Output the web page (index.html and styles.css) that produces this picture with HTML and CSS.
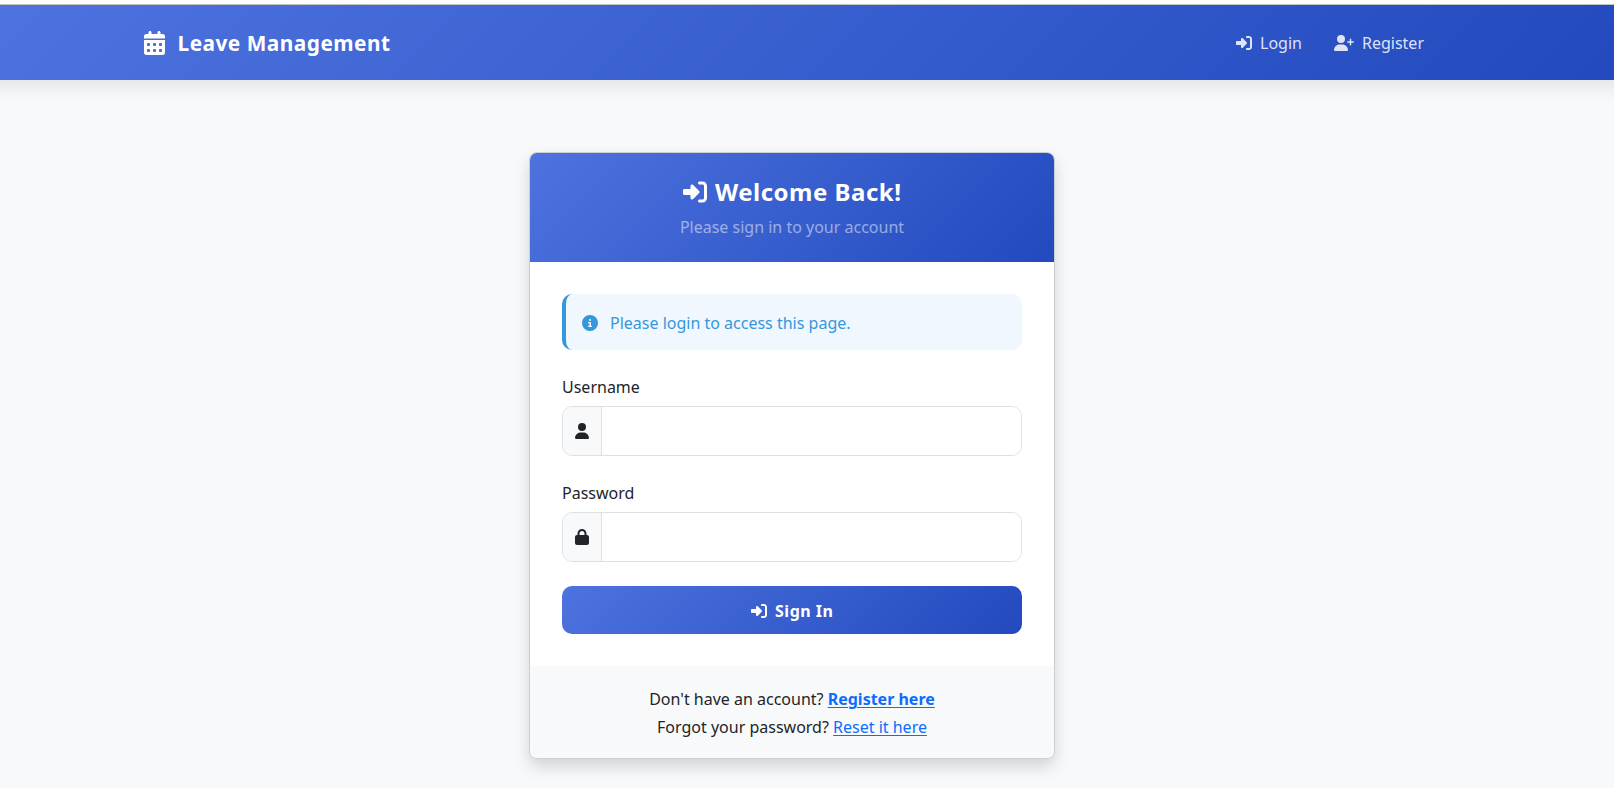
FILE: index.html
```html
<!DOCTYPE html>
<html lang="en">
<head>
<meta charset="utf-8">
<title>Login - Leave Management</title>
<link rel="stylesheet" href="styles.css">
</head>
<body>
<svg width="0" height="0" class="sprite" aria-hidden="true">
  <symbol id="sign-in" viewBox="0 0 512 512"><path d="M217.9 105.9L340.7 228.7c7.2 7.2 11.3 17.1 11.3 27.3s-4.1 20.1-11.3 27.3L217.9 406.1c-6.4 6.4-15 9.9-24 9.9c-18.7 0-33.9-15.2-33.9-33.9l0-62.1L32 320c-17.7 0-32-14.3-32-32l0-64c0-17.7 14.3-32 32-32l128 0 0-62.1c0-18.7 15.2-33.9 33.9-33.9c9 0 17.6 3.6 24 9.9zM352 416l64 0c17.7 0 32-14.3 32-32l0-256c0-17.7-14.3-32-32-32l-64 0c-17.7 0-32-14.3-32-32s14.3-32 32-32l64 0c53 0 96 43 96 96l0 256c0 53-43 96-96 96l-64 0c-17.7 0-32-14.3-32-32s14.3-32 32-32z"/></symbol>
  <symbol id="user" viewBox="0 0 448 512"><path d="M224 256A128 128 0 1 0 224 0a128 128 0 1 0 0 256zm-45.700 48C79.800 304 0 383.800 0 482.300C0 498.700 13.300 512 29.700 512H418.300c16.400 0 29.700-13.300 29.700-29.700C448 383.800 368.200 304 269.700 304H178.300z"/></symbol>
  <symbol id="lock" viewBox="0 0 448 512"><path d="M144 144v48H304V144c0-44.200-35.800-80-80-80s-80 35.800-80 80zM80 192V144C80 64.500 144.500 0 224 0s144 64.500 144 144v48h16c35.300 0 64 28.700 64 64V448c0 35.300-28.700 64-64 64H64c-35.300 0-64-28.700-64-64V256c0-35.300 28.700-64 64-64H80z"/></symbol>
  <symbol id="user-plus" viewBox="0 0 640 512"><path d="M96 128a128 128 0 1 1 256 0A128 128 0 1 1 96 128zM0 482.300C0 383.800 79.800 304 178.300 304h91.400C368.200 304 448 383.800 448 482.300c0 16.400-13.300 29.700-29.700 29.700H29.700C13.300 512 0 498.700 0 482.300zM504 312V248H440c-13.300 0-24-10.700-24-24s10.700-24 24-24h64V136c0-13.300 10.700-24 24-24s24 10.700 24 24v64h64c13.300 0 24 10.700 24 24s-10.700 24-24 24H552v64c0 13.300-10.700 24-24 24s-24-10.700-24-24z"/></symbol>
  <symbol id="info" viewBox="0 0 512 512"><path d="M256 512A256 256 0 1 0 256 0a256 256 0 1 0 0 512zM216 336h24V272H216c-13.300 0-24-10.700-24-24s10.700-24 24-24h48c13.300 0 24 10.700 24 24v88h8c13.300 0 24 10.700 24 24s-10.700 24-24 24H216c-13.300 0-24-10.700-24-24s10.700-24 24-24zm40-208a32 32 0 1 1 0 64 32 32 0 1 1 0-64z"/></symbol>
  <symbol id="calendar" viewBox="0 0 448 512"><path d="M128 0c17.700 0 32 14.300 32 32V64H288V32c0-17.700 14.300-32 32-32s32 14.300 32 32V64h48c26.500 0 48 21.500 48 48v48H0V112C0 85.500 21.500 64 48 64H96V32c0-17.700 14.300-32 32-32zM0 192H448V464c0 26.500-21.500 48-48 48H48c-26.500 0-48-21.500-48-48V192zm64 80v32c0 8.800 7.200 16 16 16h32c8.800 0 16-7.200 16-16V272c0-8.800-7.200-16-16-16H80c-8.800 0-16 7.200-16 16zm128 0v32c0 8.800 7.200 16 16 16h32c8.800 0 16-7.200 16-16V272c0-8.800-7.200-16-16-16H208c-8.800 0-16 7.200-16 16zm144-16c-8.800 0-16 7.200-16 16v32c0 8.800 7.200 16 16 16h32c8.800 0 16-7.200 16-16V272c0-8.800-7.200-16-16-16H336zM64 400v32c0 8.800 7.200 16 16 16h32c8.800 0 16-7.200 16-16V400c0-8.800-7.200-16-16-16H80c-8.800 0-16 7.200-16 16zm144-16c-8.800 0-16 7.200-16 16v32c0 8.800 7.200 16 16 16h32c8.800 0 16-7.200 16-16V400c0-8.800-7.200-16-16-16H208zm112 16v32c0 8.800 7.200 16 16 16h32c8.800 0 16-7.200 16-16V400c0-8.800-7.200-16-16-16H336c-8.800 0-16 7.200-16 16z"/></symbol>
</svg>

<nav class="navbar">
  <div class="container navbar-inner">
    <a class="brand" href="#"><svg class="brand-icon"><use href="#calendar"/></svg><span>Leave Management</span></a>
    <div class="nav-links">
      <a class="nav-link" href="#"><svg class="icon"><use href="#sign-in"/></svg><span>Login</span></a>
      <a class="nav-link" href="#"><svg class="icon icon-wide"><use href="#user-plus"/></svg><span>Register</span></a>
    </div>
  </div>
</nav>

<main class="container main">
  <section class="card">
    <header class="card-header">
      <h1 class="title"><svg class="title-icon"><use href="#sign-in"/></svg><span>Welcome Back!</span></h1>
      <p class="subtitle">Please sign in to your account</p>
    </header>
    <div class="card-body">
      <div class="alert"><svg class="icon"><use href="#info"/></svg><span>Please login to access this page.</span></div>
      <form class="form">
        <div class="field">
          <label class="label" for="username">Username</label>
          <div class="input-group">
            <span class="addon"><svg class="icon icon-narrow"><use href="#user"/></svg></span>
            <input class="input" id="username" type="text">
          </div>
        </div>
        <div class="field">
          <label class="label" for="password">Password</label>
          <div class="input-group">
            <span class="addon"><svg class="icon icon-narrow"><use href="#lock"/></svg></span>
            <input class="input" id="password" type="password">
          </div>
        </div>
        <button class="submit" type="button"><svg class="icon"><use href="#sign-in"/></svg><span>Sign In</span></button>
      </form>
    </div>
    <footer class="card-footer">
      <p>Don't have an account? <a class="strong" href="#">Register here</a></p>
      <p>Forgot your password? <a href="#">Reset it here</a></p>
    </footer>
  </section>
</main>
</body>
</html>
```
FILE: styles.css
```css
* { box-sizing: border-box; }

body {
  margin: 0;
  height: 788px;
  overflow: hidden;
  background: #f8f9fb;
  color: #212529;
  font: 16px/24px "Noto Sans", sans-serif;
}

h1, p { margin: 0; }
.sprite { display: none; }

.icon { flex: none; width: 16px; height: 16px; fill: currentColor; }
.icon-wide { width: 20px; }
.icon-narrow { width: 14px; }

.container { width: 1320px; margin-left: 132px; padding: 0 12px; }

.navbar {
  height: 80px;
  padding-top: 5px;
  background:
    linear-gradient(#fff 4px, #c3c3c3 4px) top / 100% 5px no-repeat,
    linear-gradient(135deg, #4e73df 0%, #224abe 100%) 0 5px / 100% 75px no-repeat;
  box-shadow: 0 -16px 16px 24px rgba(0, 0, 0, .08);
}
.navbar-inner { display: flex; align-items: center; justify-content: space-between; height: 75px; }
.brand {
  display: flex;
  align-items: center;
  gap: 12.5px;
  color: #fff;
  font-size: 20.8px;
  font-weight: 700;
  letter-spacing: .5px;
  text-decoration: none;
}
.brand-icon { width: 21px; height: 24px; fill: currentColor; }
.nav-links { display: flex; }
.nav-link {
  display: flex;
  align-items: center;
  gap: 8px;
  padding: 8px 16px;
  color: rgba(255, 255, 255, .85);
  text-decoration: none;
}

.main { display: flex; justify-content: center; padding-top: 72px; }
.card {
  width: 526px;
  border: 1px solid #cecfd1;
  border-radius: 8px;
  background: #fff;
  box-shadow: 0 8px 16px rgba(0, 0, 0, .15);
  overflow: hidden;
}
.card-header {
  height: 109px;
  padding-top: 24px;
  background: linear-gradient(135deg, #4e73df 0%, #224abe 100%);
  color: #fff;
  text-align: center;
}
.title {
  display: flex;
  align-items: center;
  justify-content: center;
  gap: 8.5px;
  margin-bottom: 9px;
  font-size: 24px;
  font-weight: 700;
  line-height: 29px;
  letter-spacing: .5px;
}
.title-icon { width: 24px; height: 24px; margin-top: 1px; fill: currentColor; }
.subtitle { color: rgba(255, 255, 255, .5); }

.card-body { padding: 32px; }
.alert {
  display: flex;
  align-items: center;
  gap: 12px;
  margin-bottom: 24px;
  padding: 17px 16px 15px;
  border-left: 4px solid #3498db;
  border-radius: 10px;
  background: #f0f7ff;
  color: #3498db;
}
.form { display: flex; flex-direction: column; gap: 24px; }
.field { display: flex; flex-direction: column; gap: 8px; }
.label { margin: 1px 0 -1px; }
.input-group {
  display: flex;
  height: 50px;
  border: 1px solid #dfe0e1;
  border-radius: 10px;
  overflow: hidden;
}
.addon { display: flex; align-items: center; padding: 0 12px; background: #f8f9fb; }
.input { flex: 1; border: 0; border-left: 1px solid #dfe0e1; outline: 0; background: #fff; font: inherit; }
.submit {
  display: flex;
  align-items: center;
  justify-content: center;
  gap: 8.5px;
  height: 48px;
  padding: 2px 0 0;
  border: 0;
  border-radius: 10px;
  background: linear-gradient(135deg, #4e73df 0%, #224abe 100%);
  color: #fff;
  font: 700 16px/24px "Noto Sans", sans-serif;
  letter-spacing: .5px;
}

.card-footer {
  display: flex;
  flex-direction: column;
  gap: 4px;
  padding: 21px 20px 19px;
  background: #f8f9fb;
  text-align: center;
}
.card-footer a { color: #0d6efd; text-decoration-thickness: 1px; text-underline-offset: 2px; }
.card-footer .strong { font-weight: 700; }
```
